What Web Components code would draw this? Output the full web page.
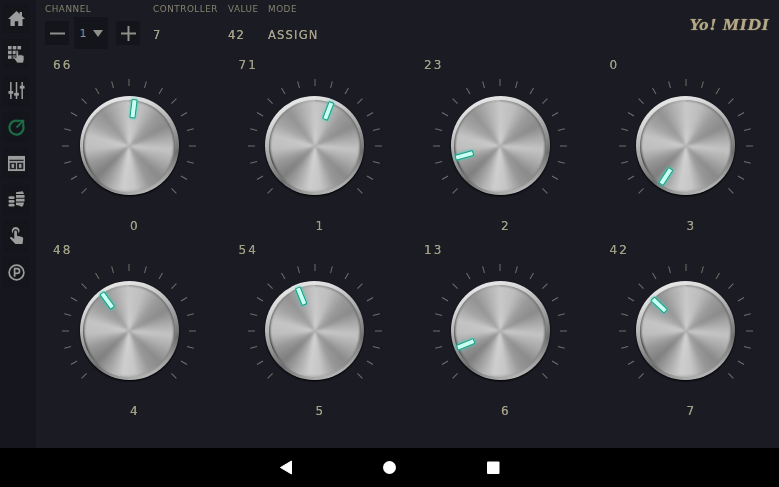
<!DOCTYPE html>
<html><head><meta charset="utf-8">
<style>
html,body{margin:0;padding:0;background:#1a1b23;width:779px;height:487px;overflow:hidden}
body{font-family:"DejaVu Sans",sans-serif}
</style></head><body>
<yo-app></yo-app>
<script>
const svgIcons={
home:`<path fill="#9c9c9c" d="M9 1 0 9.400h2.600V17h4.600v-5h3.600v5h4.600V9.400H18l-3.200-3V2h-2.400v2.200z"/>`,
pad:`<g fill="#9c9c9c"><rect x="0" y="0" width="3.800" height="3.600"/><rect x="5" y="0" width="3.800" height="3.600"/><rect x="10" y="0" width="3.800" height="3.600"/><rect x="0" y="5" width="3.800" height="3.600"/><rect x="5" y="5" width="3.800" height="3.600"/><rect x="0" y="10" width="3.800" height="3.600"/><rect x="5" y="10" width="3.800" height="3.600"/><path stroke="#14151b" stroke-width=".7" d="M8.500 5.500c0-1.300 2.200-1.300 2.300 0l.4 4.200.8-.1c.1-.9 1.600-.7 1.700.1.200-.6 1.500-.5 1.700.3.300-.4 1.400-.2 1.500.6l.1 3.900-.9 3.500h-6.400l-4-5.700c-.3-1 .7-1.600 1.500-.9l1.300 1.200z"/></g>`,
sliders:`<g fill="#9c9c9c"><path d="M2.200 0h1.600v18H2.200zM8.200 0h1.600v18H8.200zM14.200 0h1.600v18h-1.600z"/><rect x=".5" y="9.500" width="5" height="3"/><rect x="6.500" y="11.500" width="5" height="3"/><rect x="12.500" y="4" width="5" height="3"/></g>`,
dial:`<g fill="none" stroke="#1c6a46"><path d="M11.800 2.300A7.400 7.400 0 1 0 15.800 6.300" stroke-width="2.400"/><path d="M9 9 15.500 2.500M11 1.800h5.200V7" stroke-width="2"/></g>`,
layout:`<g><rect x="0" y="1" width="18" height="16" fill="#9c9c9c"/><rect x="1.500" y="5" width="15" height="1.400" fill="#23232b"/><rect x="1.800" y="8.200" width="6.600" height="6.800" fill="#23232b"/><rect x="9.600" y="8.200" width="6.600" height="6.800" fill="#23232b"/><rect x="3.800" y="9.600" width="2.600" height="4" fill="#9c9c9c"/><rect x="11.600" y="9.600" width="2.600" height="4" fill="#9c9c9c"/></g>`,
pads:`<g fill="#9c9c9c"><rect x=".5" y="5.500" width="6.500" height="3" rx="1.400"/><rect x=".5" y="9.500" width="6.500" height="3" rx="1.400"/><rect x=".5" y="13.500" width="6.500" height="3" rx="1.400"/><path d="M8.500 1.200 15.600 .2 17 3.200H8.500zM8.500 4.200H17.500v3H8.500zM8.500 8.200H17.500v3H8.500zM8.500 12.200h8.500l-.8 3-1.500 1.800-2.400-1.500-3.800-.8z"/></g>`,
touch:`<g fill="#9c9c9c"><path d="M8.100 0a4.200 4.200 0 0 0-3.200 6.900l.5-1.900a2.700 2.700 0 1 1 5.400 0l.5 1.900A4.200 4.200 0 0 0 8.100 0z"/><path d="M6.600 5c0-1.800 2.900-1.800 2.900 0v4.300l4.600 1c1.300.3 2.100 1.300 2 2.400l-.7 5.300H7.800L2.300 12.300c-.7-1 .6-2.200 1.700-1.400l2.600 1.800z"/></g>`,
park:`<g fill="none" stroke="#9c9c9c"><circle cx="9" cy="9" r="7.800" stroke-width="1.800"/><path d="M7 13.500V5h2.700a2.500 2.500 0 0 1 0 5H7" stroke-width="1.800"/></g>`
};
class YoBase extends HTMLElement{constructor(){super();this.attachShadow({mode:'open'})}}

class SideBtn extends YoBase{connectedCallback(){
 const n=this.getAttribute('icon');
 this.shadowRoot.innerHTML=`<style>:host{display:flex;width:36px;height:36.300px;align-items:center;box-sizing:border-box;padding-left:3px}
 .b{width:26px;height:30px;background:#14151b;display:flex;align-items:center;justify-content:center}
 svg{width:17px;height:17px;display:block}</style><div class="b"><svg viewBox="0 0 18 18">${svgIcons[n]}</svg></div>`;
}}
customElements.define('side-btn',SideBtn);

class SideBar extends YoBase{connectedCallback(){
 this.shadowRoot.innerHTML=`<style>:host{display:flex;flex-direction:column;width:36px;background:#16171e}</style>
 ${['home','pad','sliders','dial','layout','pads','touch','park'].map(i=>`<side-btn icon="${i}"></side-btn>`).join('')}`;
}}
customElements.define('side-bar',SideBar);

class StepBtn extends YoBase{connectedCallback(){
 const plus=this.getAttribute('kind')==='plus';
 this.shadowRoot.innerHTML=`<style>:host{display:flex;width:24px;height:24px;background:#14151b;align-items:center;justify-content:center}svg{width:15px;height:15px}</style>
 <svg viewBox="0 0 15 15"><path d="${plus?'M0 7.500h15M7.500 0v15':'M0 7.500h15'}" stroke="#8f8f8c" stroke-width="2" fill="none"/></svg>`;
}}
customElements.define('step-btn',StepBtn);

class TopBar extends YoBase{connectedCallback(){
 this.shadowRoot.innerHTML=`<style>
 :host{display:grid;grid-template-columns:108px 75px 40px 1fr auto;grid-template-rows:16px 35px;height:52px;box-sizing:border-box;padding:1px 10px 0 9px;align-items:center}
 .l{font-size:8.800px;letter-spacing:.55px;color:#85836f;white-space:nowrap}
 .v{font-size:11.500px;letter-spacing:1.200px;color:#a6a38a;white-space:nowrap;text-shadow:0 0 .6px #a6a38a}
 .ch{display:flex;align-items:center;margin-top:-3px}
 .dd{width:34px;height:32px;margin:0 8px 0 5px;background:#14151b;display:flex;align-items:center;justify-content:center;gap:6px;font-size:11px;color:#8f8f8c}
 .tri{width:0;height:0;border-left:5.500px solid transparent;border-right:5.500px solid transparent;border-top:7px solid #8f8f8c}
 .logo{grid-column:5;grid-row:1/3;align-self:start;margin-top:15px;font:italic bold 16px "Liberation Serif",serif;letter-spacing:.5px;color:#b5a886;white-space:nowrap;text-shadow:0 0 1px #b5a886;transform:scaleX(1.17);transform-origin:100% 50%}
 </style>
 <div class="l">CHANNEL</div><div class="l">CONTROLLER</div><div class="l">VALUE</div><div class="l">MODE</div>
 <div class="logo">Yo! MIDI</div>
 <div class="ch"><step-btn kind="minus"></step-btn><div class="dd"><span>1</span><span class="tri"></span></div><step-btn kind="plus"></step-btn></div>
 <div class="v">7</div><div class="v">42</div><div class="v">ASSIGN</div>`;
}}
customElements.define('top-bar',TopBar);

class YoKnob extends YoBase{connectedCallback(){
 const val=this.getAttribute('value'),idx=this.getAttribute('index'),ang=+this.getAttribute('angle');
 let ticks='';
 for(let i=-9;i<=9;i++){ticks+=`<line x1="70" y1="3" x2="70" y2="10" transform="rotate(${i*15} 70 70)"/>`}
 this.shadowRoot.innerHTML=`<style>
 :host{display:block;height:185px;position:relative;color:#a09e85}
 .val{position:absolute;left:16.500px;top:6px;font-size:12px;letter-spacing:2.200px;line-height:14px;text-shadow:0 0 .6px #a09e85}
 .idx{position:absolute;left:10px;right:0;top:167px;text-align:center;font-size:12px;letter-spacing:1px;line-height:14px;text-shadow:0 0 .6px #a09e85}
 .dial{position:absolute;left:22.500px;top:23.500px;width:140px;height:140px;display:grid;place-items:center}
 .dial>*{grid-area:1/1}
 svg{width:140px;height:140px;display:block}
 line{stroke:#6f6f69;stroke-width:1}
 .rim{width:99px;height:99px;border-radius:50%;position:relative;box-shadow:0 1px 2px #000;
  background:linear-gradient(160deg,#f2f2f2 0%,#dadada 22%,#a0a0a0 48%,#6e6e6e 68%,#a8a8a8 85%,#e0e0e0 100%)}
 .edge{position:absolute;inset:3.500px;border-radius:50%;background:conic-gradient(#8c8c8c,#555 90deg,#9a9a9a 150deg,#bbb 200deg,#222 250deg,#666 290deg,#aaa 360deg)}
 .face{position:absolute;inset:4.500px;border-radius:50%;filter:blur(.8px);
  background:radial-gradient(circle at 50% 50%,rgba(255,255,255,.2),rgba(255,255,255,.05) 30%,rgba(255,255,255,0) 60%),
  conic-gradient(from 0deg,#c8c8c8 0deg,#bdbdbd 20deg,#9a9a9a 42deg,#8b8b8b 62deg,#acacac 80deg,#c4c4c4 95deg,#ababab 114deg,#8a8a8a 135deg,#979797 152deg,#c6c6c6 172deg,#cecece 188deg,#a8a8a8 206deg,#7f7f7f 226deg,#969696 245deg,#bfbfbf 266deg,#c4c4c4 284deg,#a2a2a2 304deg,#939393 322deg,#b0b0b0 342deg,#c8c8c8 360deg)}
 .bar{position:absolute;left:46.500px;top:3px;width:6px;height:19px;box-sizing:border-box;border-radius:1px;transform-origin:3px 46.500px;transform:rotate(${ang}deg);
  background:#c8fff0;border:1px solid #1c9c88;box-shadow:0 0 3px #2fd8b8}
 </style>
 <div class="val">${val}</div>
 <div class="dial"><svg viewBox="0 0 140 140">${ticks}</svg>
 <div class="rim"><div class="edge"></div><div class="face"></div><div class="bar"></div></div></div>
 <div class="idx">${idx}</div>`;
}}
customElements.define('yo-knob',YoKnob);

class KnobGrid extends YoBase{connectedCallback(){
 const d=[[66,7],[71,21],[23,-105.500],[0,-147],[48,-36],[54,-22],[13,-112],[42,-46.500]];
 this.shadowRoot.innerHTML=`<style>:host{display:grid;grid-template-columns:repeat(4,185.500px);padding-left:.5px}</style>
 ${d.map((x,i)=>`<yo-knob value="${x[0]}" index="${i}" angle="${x[1]}"></yo-knob>`).join('')}`;
}}
customElements.define('knob-grid',KnobGrid);

class NavBar extends YoBase{connectedCallback(){
 this.shadowRoot.innerHTML=`<style>:host{display:block;height:39px;background:#000}svg{display:block;width:779px;height:39px}</style>
 <svg viewBox="0 0 779 39"><path d="M280.500 19.500 291.500 13V26Z" fill="#fff" stroke="#fff" stroke-linejoin="round"/><circle cx="389.500" cy="19.500" r="6.500" fill="#fff"/><rect x="487" y="13.500" width="12.500" height="12.500" rx="1" fill="#fff"/></svg>`;
}}
customElements.define('nav-bar',NavBar);

class YoApp extends YoBase{connectedCallback(){
 this.shadowRoot.innerHTML=`<style>:host{display:flex;flex-direction:column;width:779px;height:487px;background:#1a1b23}
 .main{display:flex;height:448px;filter:blur(.35px)}.c{flex:1;display:flex;flex-direction:column;min-width:0}</style>
 <div class="main"><side-bar></side-bar><div class="c"><top-bar></top-bar><knob-grid></knob-grid></div></div><nav-bar></nav-bar>`;
}}
customElements.define('yo-app',YoApp);
</script>
</body></html>
